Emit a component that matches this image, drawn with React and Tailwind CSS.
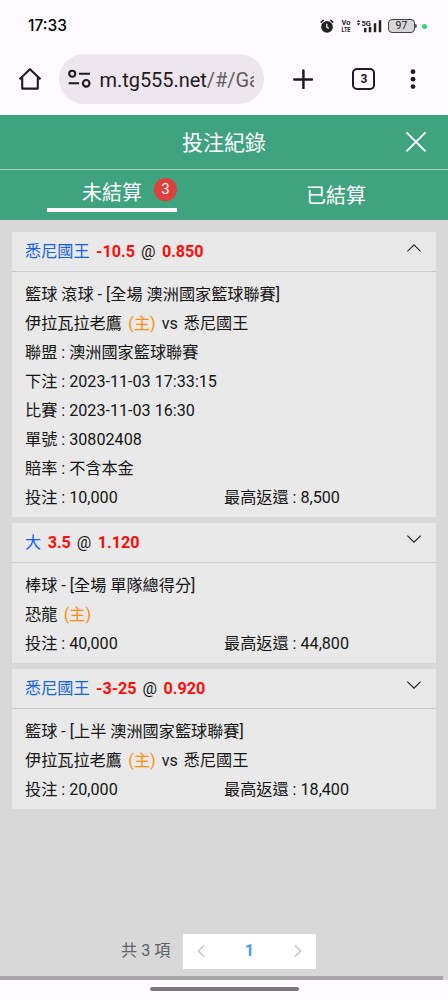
import React from 'react';

function StatusBar() {
  return (
    <div className="flex h-[45px] items-center pt-[7px] pl-7 pr-[21px] text-black">
      <span className="grow font-[Inter,sans-serif] text-[15.5px] leading-none font-medium">17:33</span>
      <svg className="mr-[7px] h-[14px] w-[14px]" viewBox="0 0 14 14">
        <circle cx="7" cy="7.9" r="5.9" fill="#222" />
        <path d="M.7 3.6 3.7.9M13.3 3.6 10.3.9" stroke="#222" strokeWidth="1.5" fill="none" />
        <path d="M6.8 4.8v3.3l2 1.3" stroke="#fff" strokeWidth="1.2" fill="none" />
      </svg>
      <svg className="mr-[5px] h-4 w-[10px]" viewBox="0 0 10 16" fontFamily="Roboto, sans-serif" fontWeight="700" fontSize="7" fill="#222">
        <text transform="translate(.5 6.800)" textLength="9" lengthAdjust="spacingAndGlyphs">Vo</text>
        <text transform="translate(.5 14)" textLength="9" lengthAdjust="spacingAndGlyphs">LTE</text>
      </svg>
      <svg className="mr-1.5 h-[14px] w-[26px]" viewBox="0 0 26 14">
        <path d="M.6 3 2.500.9l1.900 2.100zM.6 4.300h3.800L2.500 6.400z" fill="#222" />
        <text x="5.500" y="6.600" fontFamily="Roboto, sans-serif" fontWeight="700" fontSize="8" textLength="9.500" lengthAdjust="spacingAndGlyphs" fill="#222">5G</text>
        <path d="M9.200 9v4.200M14 7.800v5.400M19 4.200v9M24 1.200v12" stroke="#222" strokeWidth="2.500" />
      </svg>
      <span className="flex h-[14px] w-[27px] items-center justify-center rounded-[4px] border border-[#444] bg-[#d8d6d8] font-[Roboto,sans-serif] text-[10.5px] leading-none text-[#222]">97</span>
      <span className="h-1 w-0.5 rounded-r bg-[#555]" />
      <span className="ml-[5px] h-[5px] w-[5px] rounded-full bg-[#35d07f]" />
    </div>
  );
}

function BrowserBar() {
  return (
    <div className="flex h-[70px] items-start pt-[9px] font-[Roboto,sans-serif] text-[#1f1b20]">
      <svg className="mt-[13px] ml-[18px] h-6 w-6" viewBox="0 0 24 24" fill="none" stroke="currentColor" strokeWidth="2.1">
        <path d="M1.500 12.200 12 2.200l10.500 10M4.200 10.500v11.100h15.600V10.500" strokeLinejoin="round" />
      </svg>
      <div className="ml-[17px] flex h-[50px] w-[205px] items-center rounded-full bg-[#eee6ee] pl-[9px]">
        <svg className="h-5 w-6 shrink-0" viewBox="0 0 24 20" fill="none" stroke="currentColor" strokeWidth="2.1">
          <circle cx="4.200" cy="4.700" r="3" />
          <circle cx="18.200" cy="14.300" r="3.300" />
          <path d="M11 4.700h11M.7 14.300h10.400" />
        </svg>
        <span className="mt-0.5 ml-[7.500px] w-[154px] overflow-hidden text-[20px] leading-6 tracking-[-0.05px] whitespace-nowrap">
          m.tg555.net<span className="text-[#625d64]">/#/Ga</span>
        </span>
      </div>
      <svg className="mt-[15px] ml-[29px] h-5 w-5" viewBox="0 0 20 20" stroke="currentColor" strokeWidth="2.500" strokeLinecap="round">
        <path d="M1.300 10.400h17.800M10.400 1.500v17.700" />
      </svg>
      <span className="mt-[14px] ml-[39px] flex h-[22px] w-[23px] items-center justify-center rounded-[5px] border-2 border-current text-[13.500px] leading-none font-bold">
        <span className="scale-x-90">3</span>
      </span>
      <svg className="mt-[14px] ml-[35px] h-[22px] w-[6px]" viewBox="0 0 6 22" fill="currentColor">
        <circle cx="3" cy="3.700" r="2.400" />
        <circle cx="3" cy="11.200" r="2.400" />
        <circle cx="3" cy="18.600" r="2.400" />
      </svg>
    </div>
  );
}

function Header() {
  return (
    <div className="bg-[#40a380] text-white">
      <div className="flex h-[55px] items-center border-b border-[#b0cdc2] pr-[22px]">
        <span className="grow pt-0.5 pl-[42px] text-center text-[21px] leading-none">投注紀錄</span>
        <svg className="h-5 w-5" viewBox="0 0 20 20" stroke="white" strokeWidth="1.9" strokeLinecap="round">
          <path d="m1 .8 18 18M19 .8 1 18.800" />
        </svg>
      </div>
      <div className="flex h-[50px]">
        <div className="flex w-1/2 justify-center">
          <div className="flex h-[42px] w-[130px] items-start border-b-4 border-white pl-[35px]">
            <span className="mt-2 text-[20px] leading-[30px]">未結算</span>
            <span className="mt-2 ml-3 flex h-[23px] w-[23px] items-center justify-center rounded-full bg-[#de403c] font-[Roboto,sans-serif] text-[15px] leading-none">3</span>
          </div>
        </div>
        <div className="w-1/2 pt-[11px] text-center text-[20px] leading-[30px]">已結算</div>
      </div>
    </div>
  );
}

function Card({ pick, line, odds, open, stake, payout, children }) {
  return (
    <section className="bg-[#e9e9e9]">
      <div className="flex h-10 items-center gap-1.5 border-b border-[#cdcdcd] pt-0.5 pr-[15px] pl-[13px]">
        <span className="text-[#1261e8]">{pick}</span>
        <b className="ml-[0.500px] text-[#ff0b08]">{line}</b>
        <span>@</span>
        <b className="ml-[0.500px] grow text-[#ff0b08]">{odds}</b>
        <svg className="mb-[9px] h-2 w-[14px]" viewBox="0 0 14 8" fill="none" stroke="#222" strokeWidth="1.200">
          <path d={open ? 'M.4 7.400 7 .9l6.600 6.500' : 'M.4.6 7 7.100 13.600.6'} />
        </svg>
      </div>
      <div className="px-[13px] pt-2 pb-[5px]">
        {children}
        <div className="flex">
          <Row className="w-[199px]">投注 : {stake}</Row>
          <Row>最高返還 : {payout}</Row>
        </div>
      </div>
    </section>
  );
}

function Row({ className = '', children }) {
  return <div className={`h-[29px] leading-[29px] whitespace-nowrap ${className}`}>{children}</div>;
}

function Teams() {
  return (
    <Row className="flex gap-1.5">
      <span>伊拉瓦拉老鷹</span>
      <Home />
      <span>vs</span>
      <span>悉尼國王</span>
    </Row>
  );
}

function Home() {
  return <span className="ml-[0.500px] text-[#ff8c0d]">(主)</span>;
}

export default function App() {
  return (
    <div className="flex h-[1000px] w-[448px] flex-col overflow-hidden bg-[#fefaff] font-[Roboto,'Noto_Sans_CJK_TC',sans-serif] text-[16.150px] text-[#151515]">
      <StatusBar />
      <BrowserBar />
      <Header />
      <main className="flex grow flex-col bg-[#d8d8d8] pt-3">
        <div className="ml-3 flex w-[424px] flex-col gap-1.5">
          <Card pick="悉尼國王" line="-10.5" odds="0.850" open stake="10,000" payout="8,500">
            <Row>籃球 滾球 - [全場 澳洲國家籃球聯賽]</Row>
            <Teams />
            <Row>聯盟 : 澳洲國家籃球聯賽</Row>
            <Row>下注 : 2023-11-03 17:33:15</Row>
            <Row>比賽 : 2023-11-03 16:30</Row>
            <Row>單號 : 30802408</Row>
            <Row>賠率 : 不含本金</Row>
          </Card>
          <Card pick="大" line="3.5" odds="1.120" stake="40,000" payout="44,800">
            <Row>棒球 - [全場 單隊總得分]</Row>
            <Row className="flex gap-1.5"><span>恐龍</span><Home /></Row>
          </Card>
          <Card pick="悉尼國王" line="-3-25" odds="0.920" stake="20,000" payout="18,400">
            <Row>籃球 - [上半 澳洲國家籃球聯賽]</Row>
            <Teams />
          </Card>
        </div>
        <div className="mt-auto mb-[7px] flex h-[35px] items-center pl-[121px] text-[#606266]">
          <span className="w-[62px]">共 3 項</span>
          <div className="flex h-[35px] w-[133px] items-center justify-between bg-white pr-[14px] pl-[14px]">
            <svg className="mb-px h-3 w-2" viewBox="0 0 8 12" fill="none" stroke="#bfc2c9" strokeWidth="1.400"><path d="M7 .6 1.300 6 7 11.400" /></svg>
            <b className="text-[#409eff]">1</b>
            <svg className="mb-px h-3 w-2" viewBox="0 0 8 12" fill="none" stroke="#bfc2c9" strokeWidth="1.400"><path d="M1 .6 6.700 6 1 11.400" /></svg>
          </div>
        </div>
        <div className="h-1 w-[443px] bg-[#a7a7a7]" />
      </main>
      <div className="flex h-5 justify-center pt-[7px]">
        <div className="h-1 w-[149px] rounded-full bg-[#7b787b]" />
      </div>
    </div>
  );
}
